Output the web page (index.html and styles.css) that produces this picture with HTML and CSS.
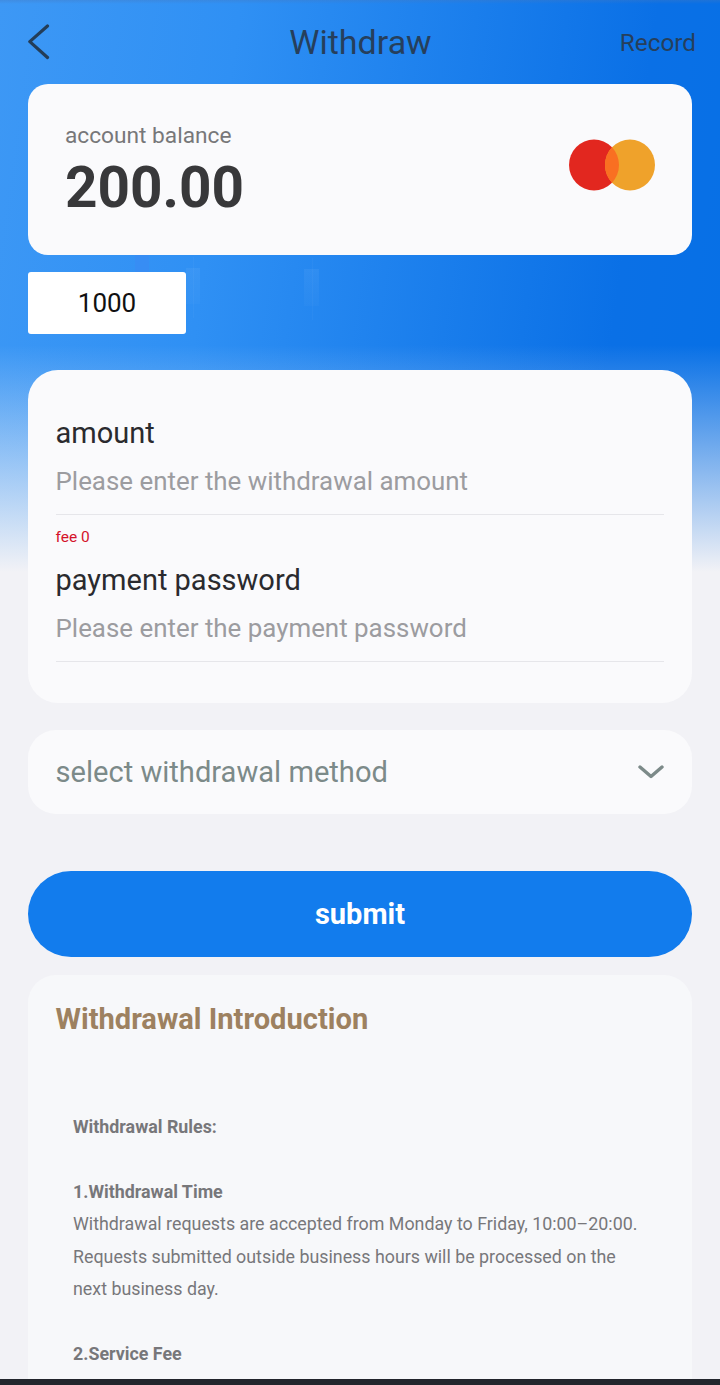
FILE: index.html
```html
<!DOCTYPE html>
<html lang="en">
<head>
    <meta charset="UTF-8">
    <title>Withdraw</title>
    <link rel="stylesheet" href="styles.css">
</head>
<body>
<div class="page">
    <div class="candles">
        <i class="candle c1"></i>
        <i class="candle c2"></i>
        <i class="candle c3"></i>
    </div>
    <div class="header">
        <svg class="back" width="24" height="36" viewBox="0 0 24 36"><path d="M19.5 2 L1.8 17.6 L19.5 33.5" fill="none" stroke="#233d58" stroke-width="3.2" stroke-linecap="round" stroke-linejoin="round"/></svg>
        <div class="page_title">Withdraw</div>
        <div class="record">Record</div>
    </div>
    <div class="balance">
        <div>
            <div class="balance_label">account balance</div>
            <div class="balance_num">200.00</div>
        </div>
        <svg class="card_logo" width="86" height="52" viewBox="0 0 86 52">
            <ellipse cx="25" cy="26" rx="25" ry="25.5" fill="#e2271f"/>
            <ellipse cx="61" cy="26" rx="25" ry="25.5" fill="#efa22b"/>
            <path d="M43 8.3 A25 25.5 0 0 1 43 43.7 A25 25.5 0 0 1 43 8.3 Z" fill="#f96f22"/>
        </svg>
    </div>
    <div class="chips">
        <div class="chip">1000</div>
    </div>
    <div class="form">
        <div class="field">
            <div class="field_label">amount</div>
            <div class="field_input">Please enter the withdrawal amount</div>
        </div>
        <div class="fee">fee 0</div>
        <div class="field">
            <div class="field_label">payment password</div>
            <div class="field_input">Please enter the payment password</div>
        </div>
    </div>
    <div class="select">
        <span>select withdrawal method</span>
        <svg width="26" height="14" viewBox="0 0 26 14"><path d="M2 2 L13 11.5 L24 2" fill="none" stroke="#7c8a89" stroke-width="3.4" stroke-linecap="round" stroke-linejoin="round"/></svg>
    </div>
    <div class="submit">submit</div>
    <div class="intro">
        <h2>Withdrawal Introduction</h2>
        <div class="rules">
            <p class="rule_head">Withdrawal Rules:</p>
            <p class="rule_head gap">1.Withdrawal Time</p>
            <p>Withdrawal requests are accepted from Monday to Friday, 10:00–20:00. Requests submitted outside business hours will be processed on the next business day.</p>
            <p class="rule_head gap">2.Service Fee</p>
        </div>
    </div>
    <div class="bottom_bar"></div>
</div>
</body>
</html>
```

FILE: styles.css
```css
*{
    margin: 0;
    padding: 0;
    box-sizing: border-box;
}
html,body{
    height: 100%;
    overflow: hidden;
}
body{
    font-family: Roboto, "Liberation Sans", sans-serif;
    background: #f2f2f6;
}
.page{
    position: relative;
    height: 1385px;
    overflow: hidden;
    padding: 0 28px;
    background-color: #f2f2f6;
    background-image:
        linear-gradient(180deg, rgba(70,120,190,0.35) 0, rgba(70,120,190,0) 4px),
        linear-gradient(180deg, rgba(242,242,246,0) 345px, #f2f2f6 572px),
        linear-gradient(98deg, #3d98f5 0%, #2f90f4 30%, #0a70e6 82%, #0670e6 100%);
    background-repeat: no-repeat;
    background-size: 100% 100%, 100% 100%, 100% 600px;
}
.candles{
    position: absolute;
    left: 0;
    top: 0;
}
.candle{
    position: absolute;
    display: block;
    background: linear-gradient(180deg, rgba(255,255,255,0.05), rgba(255,255,255,0.02));
}
.candle:before{
    content: "";
    position: absolute;
    left: 50%;
    top: -11px;
    bottom: -14px;
    width: 1px;
    background: rgba(255,255,255,0.03);
}
.c1{
    left: 135px;
    top: 255px;
    width: 14px;
    height: 17px;
    background: rgba(80,120,245,0.18);
}
.c1:before{
    display: none;
}
.c2{
    left: 186px;
    top: 268px;
    width: 14px;
    height: 36px;
}
.c3{
    left: 304px;
    top: 269px;
    width: 15px;
    height: 37px;
}

.header{
    position: relative;
    display: flex;
    align-items: center;
    justify-content: space-between;
    height: 84px;
}
.back{
    display: block;
}
.page_title{
    position: absolute;
    left: 1px;
    right: 0;
    top: 22px;
    text-align: center;
    font-size: 34px;
    line-height: 40px;
    color: #263f5c;
}
.record{
    margin-right: -4px;
    font-size: 24.3px;
    color: #263f5c;
}

.balance{
    position: relative;
    display: flex;
    align-items: center;
    justify-content: space-between;
    height: 171px;
    padding: 6px 37px 0;
    background: #fafafc;
    border-radius: 20px;
}
.balance_label{
    margin-top: -3px;
    font-size: 22.7px;
    line-height: 28px;
    color: #777779;
}
.balance_num{
    margin-top: 6px;
    font-size: 56.7px;
    line-height: 64px;
    font-weight: 700;
    color: #38383a;
}
.card_logo{
    display: block;
    margin-bottom: 16px;
}

.chips{
    position: relative;
    margin-top: 17px;
}
.chip{
    width: 158px;
    height: 62px;
    line-height: 62px;
    text-align: center;
    font-size: 26px;
    color: #111;
    background: #fff;
    border-radius: 3px;
}

.form{
    position: relative;
    margin-top: 36px;
    height: 333px;
    padding: 43px 28px 0 27.5px;
    background: #fafafc;
    border-radius: 30px;
}
.field_label{
    font-size: 29px;
    line-height: 40px;
    color: #2a2a2e;
}
.field_input{
    margin-top: 8px;
    height: 54px;
    font-size: 25.9px;
    line-height: 40px;
    color: #9c9ca0;
    border-bottom: 1px solid #e6e6ea;
}
.fee{
    height: 45px;
    padding-top: 12px;
    font-size: 15.5px;
    line-height: 20px;
    color: #d4122a;
}

.select{
    position: relative;
    display: flex;
    align-items: center;
    justify-content: space-between;
    margin-top: 27px;
    height: 84px;
    padding: 0 28px 0 27.5px;
    font-size: 29.1px;
    color: #7c8a89;
    background: #fafafc;
    border-radius: 28px;
}

.submit{
    margin-top: 57px;
    height: 86px;
    line-height: 86px;
    text-align: center;
    font-size: 29px;
    font-weight: 700;
    color: #fff;
    background: #127ced;
    border-radius: 43px;
}

.intro{
    margin-top: 18px;
    height: 500px;
    padding: 24px 28px 0 27.5px;
    background: #f7f8fa;
    border-radius: 28px;
}
.intro h2{
    font-size: 29.1px;
    line-height: 40px;
    font-weight: 700;
    color: #9d8160;
}
.rules{
    margin-top: 72px;
    padding: 0 17.5px;
    font-size: 17.84px;
    line-height: 32.4px;
    color: #77777a;
}
.rule_head{
    font-weight: 700;
}
.gap{
    margin-top: 32.4px;
}

.bottom_bar{
    position: absolute;
    left: 0;
    right: 0;
    bottom: 0;
    height: 6px;
    background: #22252c;
}
```
